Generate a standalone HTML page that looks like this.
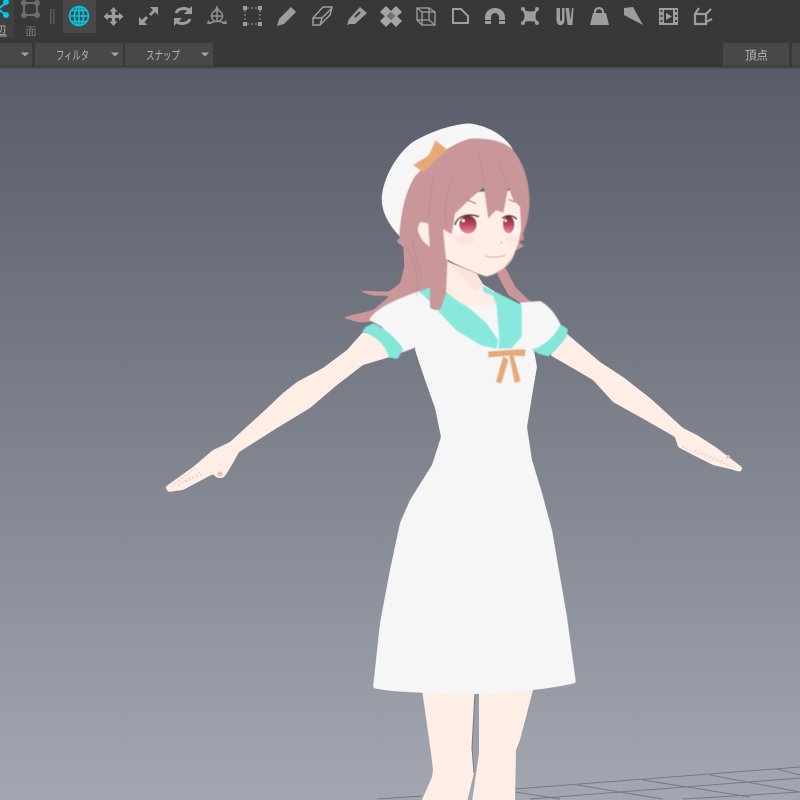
<!DOCTYPE html>
<html><head><meta charset="utf-8"><style>
html,body{margin:0;padding:0;width:800px;height:800px;overflow:hidden;background:#5b5f6b}
svg{display:block;position:absolute;left:0;top:0}
text{font-family:"Liberation Sans","Noto Sans CJK JP",sans-serif}
</style></head><body>
<svg width="800" height="800" viewBox="0 0 800 800" xmlns="http://www.w3.org/2000/svg">
<defs>
<linearGradient id="bg" x1="0" y1="68" x2="0" y2="800" gradientUnits="userSpaceOnUse"><stop offset="0" stop-color="#585c68"/><stop offset="1" stop-color="#a3a7b1"/></linearGradient>
<linearGradient id="iris" x1="0" y1="0" x2="0" y2="1"><stop offset="0" stop-color="#6a2c3a"/><stop offset=".45" stop-color="#b84258"/><stop offset="1" stop-color="#f08c9c"/></linearGradient>
<filter id="sm" filterUnits="userSpaceOnUse" x="0" y="60" width="800" height="740" color-interpolation-filters="sRGB"><feGaussianBlur stdDeviation="1.3"/><feComponentTransfer><feFuncA type="linear" slope="5" intercept="-2"/></feComponentTransfer></filter>
<filter id="sf" filterUnits="userSpaceOnUse" x="0" y="60" width="800" height="740" color-interpolation-filters="sRGB"><feGaussianBlur stdDeviation=".45"/></filter>
</defs>
<rect width="800" height="800" fill="url(#bg)"/>

<!-- grid -->
<g stroke="#767a84" stroke-width="1" fill="none">
<path d="M377 799L422 796M515 789L800 767M530 799L800 778M683 799L800 792M515 792L560 799M577 785L663 799M643 780L750 797M710 775L800 792M777 769L800 775"/>
</g>

<!-- legs -->
<path d="M422 690L431 753L433 770L432 777L421 802L467 802L474 773L472 748L475 690Z" fill="#ffeee5"/>
<path d="M479 690L479 753L472 802L515 802L516 750L520 740L533 690Z" fill="#ffeee5"/>
<path d="M475 692L472 748L474 773" stroke="#777b85" stroke-width="1" fill="none"/>

<!-- arms -->
<g filter="url(#sm)">
<path d="M363 332L347 350L323 368L297 382L283 393L263 412L230 442L213 450L193 467L165 487L168 492L183 490L213 474L217 478L223 478L227 473L233 463L239 452L247 447L277 428L310 408L337 385L363 365L390 357L400 340Z" fill="#ffeee5"/>
<path d="M566 333L600 362L623 377L650 398L683 428L697 435L717 448L743 468L740 472L730 469L713 465L693 455L678 447L675 437L640 417L613 402L593 380L550 355Z" fill="#ffeee5"/>
</g>
<circle cx="220" cy="474" r="2.500" fill="#f7b8b0"/>
<circle cx="728" cy="457" r="2" fill="#f7c0b8"/>
<g stroke="#c8a8a0" stroke-width=".6" fill="none" stroke-dasharray="2 2" opacity=".8"><path d="M172 486L195 468M178 485L200 472M185 482L203 474"/><path d="M682 447L710 458L735 468M695 450L725 462"/></g>

<!-- hat and back hair -->
<g filter="url(#sm)"><g transform="translate(340 110) scale(.33333)">
<path d="M185 385C150 350 125 310 125 265C128 210 165 135 220 95C270 65 330 45 385 40C440 45 495 75 520 120L300 300Z" fill="#f6f6f6"/>
</g></g>
<g filter="url(#sm)"><g transform="translate(340 110) scale(.33333)">
<path d="M470 490L505 555L560 590L612 600L560 565L525 530L495 470Z" fill="#c9969a"/>
<path d="M400 85C340 95 270 150 225 200C195 250 183 310 180 385L167 393L190 410L193 470L180 520L145 545L45 541L100 557L150 557L100 600L4 623L60 638L100 634L140 600L200 560L280 530L290 600L305 595L318 540L320 470L350 300Z" fill="#c9969a"/>
<path d="M305 450L305 545L385 600L480 600L465 545L428 522L410 490Z" fill="#ffeee5"/>
</g></g>
<g transform="translate(340 110) scale(.33333)">
<path d="M322 455L405 540L430 525L410 490Z" fill="#fbe4da"/>
</g>

<!-- dress -->
<g filter="url(#sm)">
<path d="M415 350L425 380L435 408L441 437L432 465L410 500L400 523L390 570L380 623L373 688C390 692 423 693 470 694C500 694 545 690 576 683L567 617L552 530L542 493L532 460L527 427L533 390L537 367L533 345L520 305L420 305Z" fill="#f6f6f6"/>
</g>

<g filter="url(#sf)"><g transform="translate(340 110) scale(.33333)">
<!-- sleeves -->
<path d="M88 630C100 600 160 570 238 543L300 600L228 712L185 728L165 700L125 650Z" fill="#f6f6f6"/>
<path d="M540 578L600 573C630 588 650 618 664 648L640 705L600 725L570 722L550 660Z" fill="#f6f6f6"/>
<path d="M66 665L78 650L100 640C130 650 172 688 190 718L172 747L146 742C140 710 110 678 66 665Z" fill="#83e6d9"/>
<path d="M574 718C610 712 645 678 662 643L683 657L681 678C662 706 642 726 625 739L598 732Z" fill="#83e6d9"/>
<!-- shirt inset -->
<path d="M385 590L470 590L478 695L430 650Z" fill="#f6f6f6"/>
<!-- collar -->
<path d="M235 545L275 530L318 545C350 575 385 590 400 605L440 640L475 692L470 716L425 707L350 662L300 610L270 570Z" fill="#89e8dc"/>
<path d="M428 527L545 585L545 680L515 715L475 716L478 692L470 590L460 558L430 545Z" fill="#89e8dc"/>
<!-- ribbon -->
<path d="M445 725L505 720L556 718L555 738L505 737L445 742Z" fill="#e7a878"/>
<path d="M490 738L468 816L484 820L505 750Z" fill="#e7a878"/>
<path d="M508 738L524 818L542 814L520 735Z" fill="#e7a878"/>
<!-- front hair lock -->
<path d="M240 330L270 440L270 592C280 602 295 602 302 596L318 550L322 460L310 350Z" fill="#c9969a"/>
<!-- ear -->
<path d="M232 345C240 332 262 335 268 345L272 412C250 400 232 375 232 345Z" fill="#ffeee5"/>
<!-- face -->
<path d="M300 250L310 370L318 448C360 470 405 490 440 500C480 490 510 465 520 440L545 375L550 240Z" fill="#ffeee5"/>
<path d="M320 448C360 470 405 490 440 500C475 490 505 470 520 440" fill="none" stroke="#b09088" stroke-width="1.500"/>
<ellipse cx="375" cy="388" rx="30" ry="14" fill="#fde4dc"/>
<ellipse cx="515" cy="388" rx="20" ry="10" fill="#fde6de"/>
<!-- side right strand -->
<path d="M545 350L535 400L520 435L480 495L495 470L530 420L552 408L535 395L552 388Z" fill="#c9969a"/>
<!-- bangs -->
<path d="M400 85C450 85 490 95 515 115C555 160 572 230 568 290C565 330 555 360 545 380L540 290L520 270L505 232L490 308L468 300L445 325L432 232L395 262L345 310L335 372L305 355L318 450L300 470L275 500L265 340L240 335L210 420L190 390L178 380C183 310 195 250 225 200C270 150 340 95 400 85Z" fill="#c9969a"/>
<g stroke="#a87478" stroke-width="1.500" fill="none" opacity=".6">
<path d="M415 120L432 215M350 180C320 230 310 290 320 350M280 190L265 320M470 140L500 220M215 390L245 500M195 410C225 450 240 500 230 560"/>
</g>
<!-- bow -->
<path d="M287 91L323 120L292 145L250 188L220 165L266 136Z" fill="#e7a878"/>
<!-- eyes -->
<path d="M382 270L408 281" stroke="#8a5a5a" stroke-width="2.500" fill="none"/>
<path d="M505 268L525 276" stroke="#8a5a5a" stroke-width="2.500" fill="none"/>
<ellipse cx="382" cy="346" rx="34" ry="28" fill="#fff"/>
<ellipse cx="508" cy="346" rx="22" ry="27" fill="#fff"/>
<ellipse cx="384" cy="344" rx="26" ry="27" fill="url(#iris)"/>
<ellipse cx="506" cy="344" rx="17" ry="26" fill="url(#iris)"/>
<path d="M345 345C350 320 380 308 417 320" stroke="#4a3036" stroke-width="4" fill="none"/>
<path d="M487 325C500 314 520 315 530 328" stroke="#4a3036" stroke-width="4" fill="none"/>
<circle cx="370" cy="332" r="5" fill="#fff"/><circle cx="497" cy="332" r="4" fill="#fff"/>
<path d="M484 395v5" stroke="#907070" stroke-width="2"/>
<path d="M435 438C455 444 475 442 495 436" stroke="#a08078" stroke-width="1.600" fill="none"/>
</g></g>

<!-- toolbar -->
<rect width="800" height="67" fill="#383838"/>
<rect y="67" width="800" height="2" fill="#4a4e5c"/>
<rect x="0" y="0" width="14" height="38" fill="#404040"/>
<rect x="63" y="0" width="33" height="33" fill="#484848"/>
<g fill="#5d5d5d"><rect x="50" y="9" width="1.500" height="15"/><rect x="53" y="9" width="1.500" height="15"/></g>

<!-- left partial icon -->
<g stroke="#00c8e8" stroke-width="2" fill="#00c8e8"><path d="M-2 9L6 3M-2 9L6 15" fill="none"/><circle cx="6" cy="2" r="2"/><circle cx="6" cy="15" r="2"/></g>
<text x="1" y="34" font-size="11" fill="#b5b5b5" text-anchor="middle">辺</text>
<path d="M-6 36H7" stroke="#aaa" stroke-width="1"/>
<g fill="none" stroke="#6d6d6d" stroke-width="2"><rect x="24" y="3" width="13" height="12"/></g>
<g fill="#6d6d6d"><circle cx="24" cy="3" r="3"/><circle cx="37" cy="3" r="3"/><circle cx="24" cy="15" r="3"/><circle cx="37" cy="15" r="3"/></g>
<text x="31" y="35" font-size="11" fill="#7a7a7a" text-anchor="middle">面</text>

<!-- globe -->
<g fill="none" stroke="#00c8e8" stroke-width="1.600"><circle cx="79" cy="16" r="9.500"/><ellipse cx="79" cy="16" rx="4.500" ry="9.500"/><path d="M79 6.500V25.500M69.500 16H88.500M71 10.500H87M71 21.500H87"/></g>

<g fill="#9d9d9d" stroke="none">
<!-- move -->
<path d="M113.500 7L117.500 11.500H115.200V15H119V12.500L123.500 16.500L119 20.500V18H115.200V21.500H117.500L113.500 26L109.500 21.500H111.800V18H108V20.500L103.500 16.500L108 12.500V15H111.800V11.500H109.500Z"/>
<!-- scale -->
<path d="M150 7H158V15L155 12L151 16L149 14L153 10ZM139 25V17L142 20L146 16L148 18L144.500 22L147 25Z"/>
</g>
<!-- rotate -->
<g fill="none" stroke="#9d9d9d" stroke-width="3"><path d="M176 13C178 8 186 7 190 11"/><path d="M190 19C188 24 180 25 176 21"/></g>
<path d="M192 6V14H184ZM174 26V18H182Z" fill="#9d9d9d"/>
<!-- pivot -->
<g fill="none" stroke="#8f8f8f" stroke-width="1.500"><circle cx="217" cy="16" r="5.500"/><path d="M217 6V21L209 23M217 21L226 23M212 16H222"/></g>
<path d="M217 6l3 5h-6zM208 20l-1 4h5zM226 20l1 4h-5z" fill="#8f8f8f"/>
<!-- rect select -->
<g fill="#9d9d9d"><rect x="243" y="6" width="4" height="4"/><rect x="258" y="6" width="4" height="4"/><rect x="243" y="22" width="4" height="4"/><rect x="258" y="22" width="4" height="4"/></g>
<path d="M247 8H258M247 24H258M245 10V22M260 10V22" stroke="#9d9d9d" stroke-width="1" stroke-dasharray="2 2" fill="none"/>
<!-- pencil -->
<path d="M277 26L279 19L291 7L296 12L284 24Z" fill="#9d9d9d"/>
<!-- eraser -->
<g fill="none" stroke="#9d9d9d" stroke-width="1.500"><path d="M313 18L323 7H332L330 15L320 25H313Z"/><path d="M313 18H322L332 8M322 18L320 25"/></g>
<!-- marker -->
<path d="M347 25L349 19L360 7L367 13L355 24H350Z" fill="#9d9d9d"/>
<path d="M355 17l5-5" stroke="#383838" stroke-width="2"/>
<!-- bandage -->
<path d="M381 12L386 7L391 12L396 7L401 12L396 16L401 21L396 26L391 21L386 26L381 21L386 16Z" fill="#a5a5a5" stroke="#a5a5a5" stroke-width="1.500" stroke-linejoin="round"/>
<rect x="388" y="13" width="6" height="6" fill="#6f6f6f" transform="rotate(45 391 16)"/>
<!-- cube -->
<g fill="none" stroke="#9d9d9d" stroke-width="1.300"><rect x="417" y="8" width="12" height="12"/><rect x="422" y="12" width="13" height="13"/><path d="M417 8L422 12M429 8L435 12M417 20L422 25M429 20L435 25"/></g>
<!-- face cut -->
<path d="M453 9H461L468 16V23H453Z" fill="none" stroke="#9d9d9d" stroke-width="2"/>
<!-- magnet -->
<path d="M485 24V17A10 9 0 0 1 505 17V24H499V17A4 4 0 0 0 491 17V24Z" fill="#9d9d9d"/>
<path d="M485 20.500H491M499 20.500H505" stroke="#383838" stroke-width="1"/>
<!-- shrink -->
<path d="M524 11C528 13 534 13 536 11C534 14 534 19 536 21C533 20 527 20 524 21C526 18 526 14 524 11Z" fill="#9d9d9d" stroke="#9d9d9d" stroke-width="2" stroke-linejoin="round"/>
<g fill="#9d9d9d"><circle cx="523" cy="9" r="2"/><circle cx="537" cy="9" r="2"/><circle cx="523" cy="23" r="2"/><circle cx="537" cy="23" r="2"/></g>
<!-- UV -->
<path d="M556.500 8H560V20C560 21 562 21 562 20V8H564.500V20C564.500 27 556.500 27 556.500 20ZM565.500 8H569L570.500 20L572 8H573.500L572.500 25H567.500Z" fill="#9d9d9d"/>
<!-- weight -->
<path d="M594 13C593 5 605 5 604 13H606L609 25H590L593 13ZM596 13H602C603 8 595 8 596 13Z" fill="#9d9d9d"/>
<!-- knife -->
<path d="M624 8L633 7L643 25L624 15Z" fill="#9d9d9d"/>
<!-- film -->
<path d="M659 8H678V25H659Z" fill="#9d9d9d"/>
<path d="M664 10H673V23H664Z" fill="#383838"/>
<path d="M666 13L672 16.500L666 20Z" fill="#9d9d9d"/>
<g fill="#383838"><rect x="660.500" y="10" width="2" height="2"/><rect x="660.500" y="15" width="2" height="2"/><rect x="660.500" y="20" width="2" height="2"/><rect x="675" y="10" width="2" height="2"/><rect x="675" y="15" width="2" height="2"/><rect x="675" y="20" width="2" height="2"/></g>
<!-- last -->
<path d="M695 14H706V24H695ZM695 14L699 8M706 14L711 9M706 22L712 19" fill="none" stroke="#9d9d9d" stroke-width="2.200"/>

<!-- row 2 -->
<g fill="#484848"><rect x="0" y="43" width="32" height="23"/><rect x="35" y="43" width="88" height="23"/><rect x="125" y="43" width="88" height="23"/><rect x="723" y="43" width="66" height="23"/><rect x="792" y="43" width="8" height="23"/></g>
<g fill="#a5a5a5"><path d="M21 52.500H29L25 56.500Z"/><path d="M111 52.500H119L115 56.500Z"/><path d="M201 52.500H209L205 56.500Z"/></g>
<g font-size="12" fill="#b8b8b8"><text x="56" y="59.500" textLength="33" lengthAdjust="spacingAndGlyphs">フィルタ</text><text x="146" y="59.500" textLength="34" lengthAdjust="spacingAndGlyphs">スナップ</text><text x="745" y="59.500" textLength="23" lengthAdjust="spacingAndGlyphs">頂点</text></g>
</svg>
</body></html>
